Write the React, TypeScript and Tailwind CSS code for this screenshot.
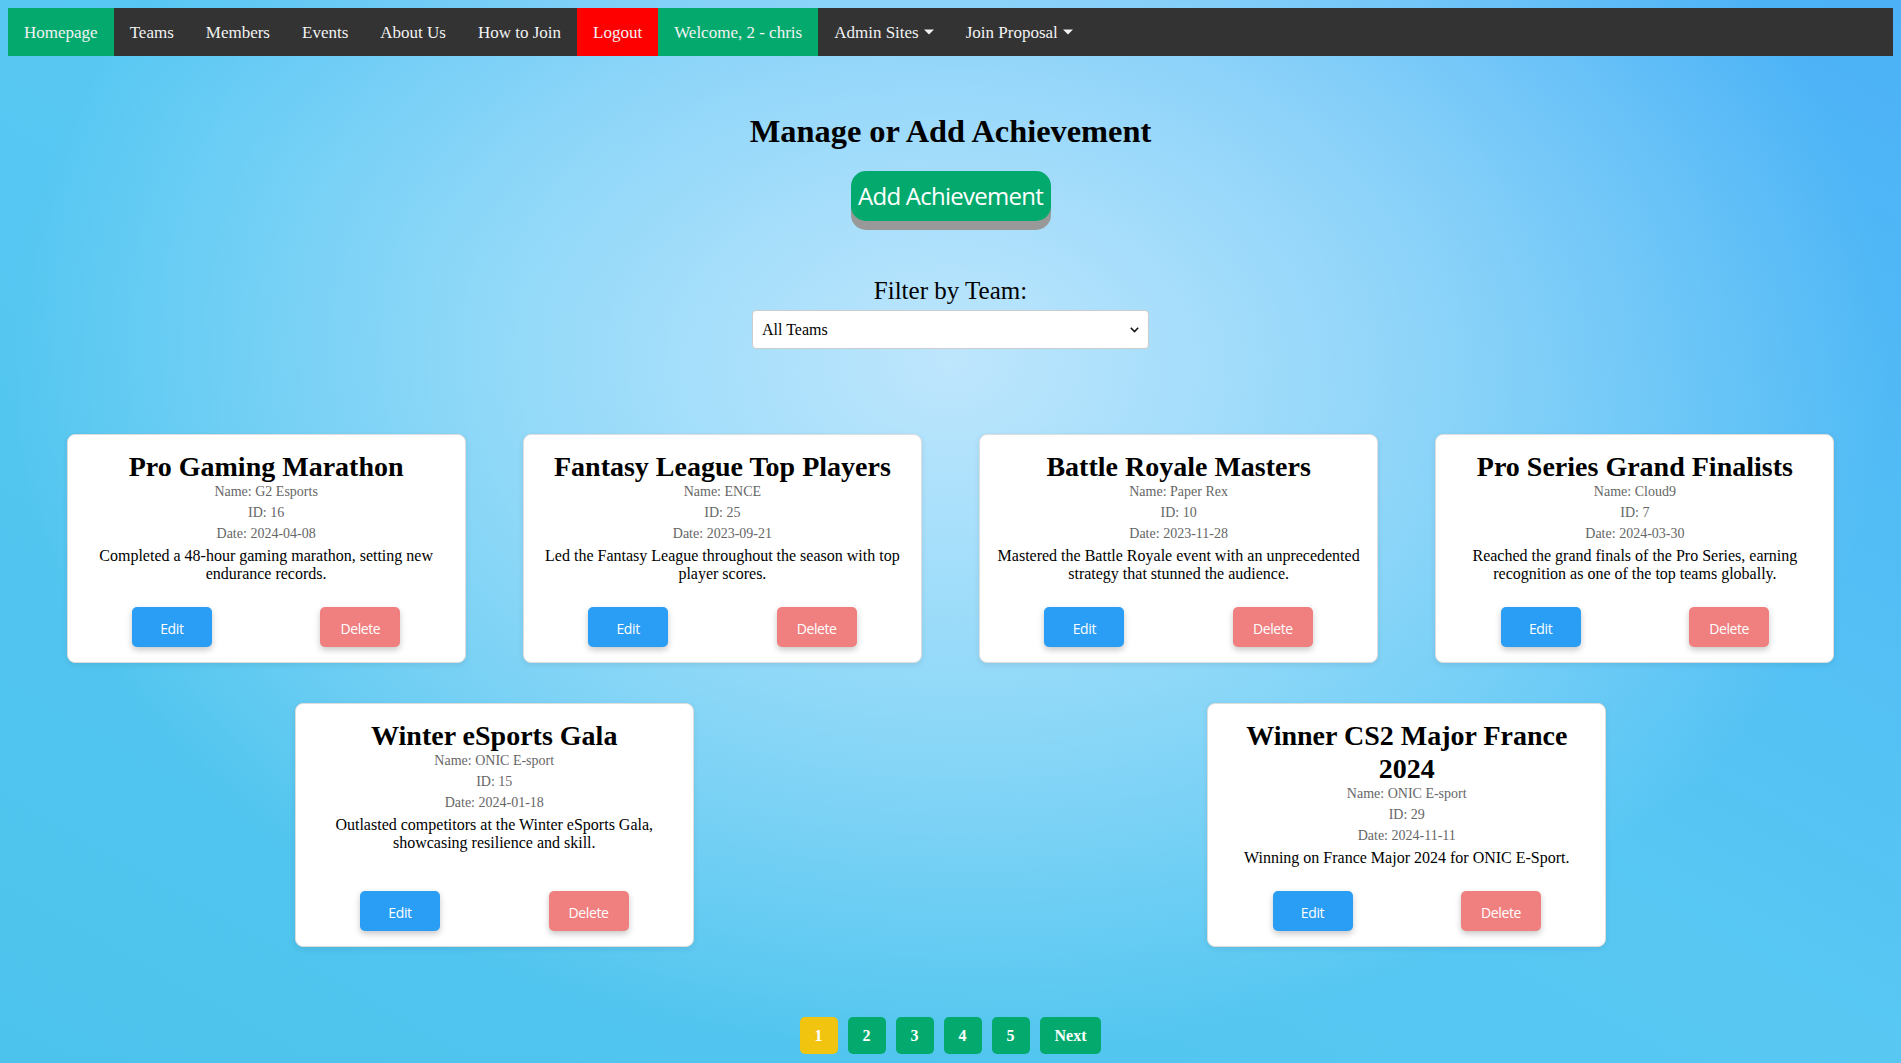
import { useState } from 'react'

type Achievement = {
  id: number
  title: string
  team: string
  date: string
  description: string
}

const achievements: Achievement[] = [
  { id: 16, title: 'Pro Gaming Marathon', team: 'G2 Esports', date: '2024-04-08', description: 'Completed a 48-hour gaming marathon, setting new endurance records.' },
  { id: 25, title: 'Fantasy League Top Players', team: 'ENCE', date: '2023-09-21', description: 'Led the Fantasy League throughout the season with top player scores.' },
  { id: 10, title: 'Battle Royale Masters', team: 'Paper Rex', date: '2023-11-28', description: 'Mastered the Battle Royale event with an unprecedented strategy that stunned the audience.' },
  { id: 7, title: 'Pro Series Grand Finalists', team: 'Cloud9', date: '2024-03-30', description: 'Reached the grand finals of the Pro Series, earning recognition as one of the top teams globally.' },
  { id: 15, title: 'Winter eSports Gala', team: 'ONIC E-sport', date: '2024-01-18', description: 'Outlasted competitors at the Winter eSports Gala, showcasing resilience and skill.' },
  { id: 29, title: 'Winner CS2 Major France 2024', team: 'ONIC E-sport', date: '2024-11-11', description: 'Winning on France Major 2024 for ONIC E-Sport.' },
]

function Caret() {
  return (
    <svg width="10" height="6" viewBox="0 0 10 6" className="ml-[5px] mt-[-2px]">
      <path d="M0 0.5h10L5 5.5z" fill="#f2f2f2" />
    </svg>
  )
}

function NavLink({ label, className = '' }: { label: string; className?: string }) {
  return (
    <a className={`flex h-[48px] items-center px-[16px] pt-[2px] text-[17px] text-[#f2f2f2] cursor-pointer ${className}`}>
      {label}
    </a>
  )
}

function Card({ a }: { a: Achievement }) {
  return (
    <div className="m-[20px] flex w-[399px] flex-col rounded-[8px] border border-[#dddddd] bg-white px-[10px] pt-[15px] pb-[15px] text-center shadow-[0_2px_6px_rgba(0,0,0,0.08)]">
      <h2 className="text-[28px] font-bold leading-[33px] text-black">{a.title}</h2>
      <p className="mt-[1px] text-[14px] leading-[16px] text-[#666666]">Name: {a.team}</p>
      <p className="mt-[5px] text-[14px] leading-[16px] text-[#666666]">ID: {a.id}</p>
      <p className="mt-[5px] text-[14px] leading-[16px] text-[#666666]">Date: {a.date}</p>
      <p className="mt-[5px] text-[16px] leading-[18px] text-black">{a.description}</p>
      <div className="mt-auto flex justify-around pt-[24px]">
        <button className="h-[40px] w-[80px] rounded-[5px] bg-[#2a9df4] pt-[2px] font-['Open_Sans',sans-serif] text-[14px] tracking-[-0.4px] text-white shadow-[0_3px_6px_rgba(0,0,0,0.22)]">
          Edit
        </button>
        <button className="h-[40px] w-[80px] rounded-[5px] bg-[#f08080] pt-[2px] font-['Open_Sans',sans-serif] text-[14px] tracking-[-0.4px] text-white shadow-[0_3px_6px_rgba(0,0,0,0.22)]">
          Delete
        </button>
      </div>
    </div>
  )
}

export default function App() {
  const [team, setTeam] = useState('all')
  const [page, setPage] = useState(1)

  return (
    <div className="min-h-screen bg-[radial-gradient(ellipse_farthest-corner_at_50%_34%,rgba(190,230,253,1)_0%,rgba(190,230,253,0.55)_35%,rgba(190,230,253,0)_70%),linear-gradient(to_top_right,#4cc3ec,#58c8f3_50%,#4cb1f7)] p-[8px] font-['Liberation_Serif','Times_New_Roman',serif]">
      {/* Top nav */}
      <nav className="flex h-[48px] bg-[#333333]">
        <NavLink label="Homepage" className="bg-[#04aa6d]" />
        <NavLink label="Teams" />
        <NavLink label="Members" />
        <NavLink label="Events" />
        <NavLink label="About Us" />
        <NavLink label="How to Join" />
        <NavLink label="Logout" className="bg-[#ff0000]" />
        <NavLink label="Welcome, 2 - chris" className="bg-[#04aa6d]" />
        <a className="flex h-[48px] items-center px-[16px] pt-[2px] text-[17px] text-[#f2f2f2]">
          Admin Sites <Caret />
        </a>
        <a className="flex h-[48px] items-center px-[16px] pt-[2px] text-[17px] text-[#f2f2f2]">
          Join Proposal <Caret />
        </a>
      </nav>

      {/* Header */}
      <div className="flex flex-col items-center">
        <h1 className="mt-[57px] text-[32.4px] font-bold leading-[37px] text-black">Manage or Add Achievement</h1>
        <button className="mt-[21px] h-[50px] w-[200px] rounded-[15px] bg-[#04aa6d] font-['Open_Sans',sans-serif] text-[24px] tracking-[-0.75px] text-white shadow-[0_9px_#999999]">
          Add Achievement
        </button>
        <label className="mt-[56px] text-[25px] leading-[28px] text-black">Filter by Team:</label>
        <div className="relative mt-[5px]">
          <select
            value={team}
            onChange={e => setTeam(e.target.value)}
            className="h-[39px] w-[397px] appearance-none rounded-[4px] border border-[#cccccc] bg-white pl-[9px] pr-[24px] text-[16px] text-black"
          >
            <option value="all">All Teams</option>
            <option value="g2">G2 Esports</option>
            <option value="ence">ENCE</option>
            <option value="onic">ONIC E-sport</option>
          </select>
          <svg width="9" height="6" viewBox="0 0 9 6" className="pointer-events-none absolute right-[10px] top-[17px]">
            <path d="M0.8 0.8L4.5 4.6L8.2 0.8" fill="none" stroke="#111111" strokeWidth="1.5" />
          </svg>
        </div>
      </div>

      {/* Cards */}
      <div className="mt-[65px] flex flex-wrap justify-around px-[30px]">
        {achievements.map(a => (
          <Card key={a.id} a={a} />
        ))}
      </div>

      {/* Pagination */}
      <div className="mt-[50px] flex justify-center gap-[10px]">
        {[1, 2, 3, 4, 5].map(n => (
          <button
            key={n}
            onClick={() => setPage(n)}
            className={`h-[37px] rounded-[5px] px-[15px] text-[16px] font-bold text-white ${n === page ? 'bg-[#f1c40f]' : 'bg-[#04aa6d]'}`}
          >
            {n}
          </button>
        ))}
        <button className="h-[37px] rounded-[5px] bg-[#04aa6d] px-[15px] text-[16px] font-bold text-white">Next</button>
      </div>
    </div>
  )
}
